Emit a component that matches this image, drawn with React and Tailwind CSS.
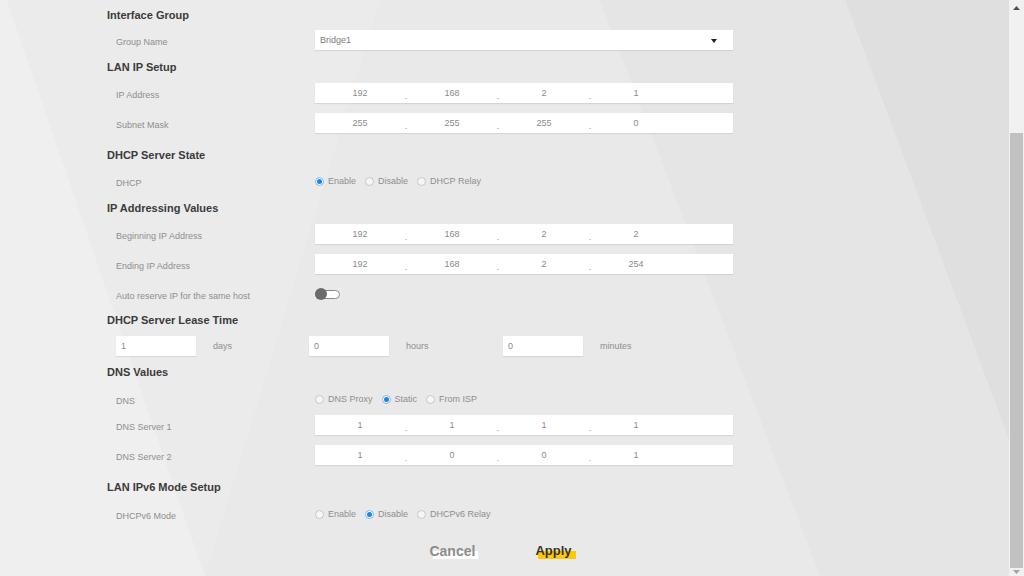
import React from "react";

const label = "w-[208px] pl-[9px] pt-[5px] text-[9px] text-[#8e8e8e]";
const box = "bg-white shadow-[0_1px_1px_rgba(0,0,0,0.08)]";

const Heading = ({ children, className = "" }) => (
  <div className={`h-[24px] flex items-center text-[11px] font-bold text-[#3a3a3a] ${className}`}>
    {children}
  </div>
);

const Row = ({ title, children, className = "" }) => (
  <div className={`h-[20px] flex items-center ${className}`}>
    <div className={label}>{title}</div>
    {children}
  </div>
);

const IpInput = ({ octets }) => (
  <div className={`w-[418px] h-[20px] flex items-stretch text-[9px] text-[#8a8a8a] ${box}`}>
    {octets.map((o, i) => (
      <React.Fragment key={i}>
        <div className="w-[90px] flex items-center justify-center pt-[1px]">{o}</div>
        {i < 3 && (
          <div className="w-[2px] flex items-end justify-center pb-[2px] leading-none">.</div>
        )}
      </React.Fragment>
    ))}
  </div>
);

const Radio = ({ checked, text }) => (
  <div className="flex items-center gap-[4px]">
    {checked ? (
      <div className="w-[9px] h-[9px] rounded-full border border-[#7bb8ee] bg-white flex items-center justify-center">
        <div className="w-[5px] h-[5px] rounded-full bg-[#1f86e0]" />
      </div>
    ) : (
      <div className="w-[9px] h-[9px] rounded-full border border-[#c6c6c6] bg-[#f6f6f6]" />
    )}
    <span className="pt-[1px] text-[9px] text-[#8e8e8e]">{text}</span>
  </div>
);

const RadioGroup = ({ items, selected }) => (
  <div className="flex items-center gap-[9px] pt-[1px]">
    {items.map((t) => (
      <Radio key={t} text={t} checked={t === selected} />
    ))}
  </div>
);

const LeaseField = ({ value, unit, w }) => (
  <div className={`flex items-center ${w}`}>
    <div className={`w-[80px] h-[20px] flex items-center pl-[5px] pt-[1px] text-[9px] text-[#8a8a8a] ${box}`}>
      {value}
    </div>
    <span className="ml-[17px] pt-[1px] text-[9px] text-[#8e8e8e]">{unit}</span>
  </div>
);

const Background = () => (
  <svg
    className="absolute inset-0 w-full h-full"
    viewBox="0 0 1009 576"
    preserveAspectRatio="none"
  >
    <rect width="1009" height="576" fill="#e9e9e9" />
    <polygon points="0,0 7,0 205,576 0,576" fill="#efefef" />
    <polygon points="7,0 380,0 205,576" fill="#ebebeb" />
    <polygon points="845,0 1009,0 1009,440" fill="#dfdfdf" />
    <polygon points="600,0 845,0 1009,440 1009,576 820,576" fill="#e5e5e5" />
  </svg>
);

export default function App() {
  return (
    <div className="flex h-[576px] w-full overflow-hidden font-['Liberation_Sans',Arial,sans-serif]">
      <main className="relative flex-1">
        <Background />
        <div className="relative flex flex-col pl-[107px] pt-[3px]">
          <Heading>Interface Group</Heading>
          <Row title="Group Name" className="mt-[3px]">
            <div className={`w-[418px] h-[20px] flex items-center justify-between pl-[5px] pr-[16px] pt-[1px] text-[9px] text-[#7a7a7a] ${box}`}>
              <span>Bridge1</span>
              <svg width="6" height="4" viewBox="0 0 6 4">
                <path d="M0 0 L6 0 L3 4 Z" fill="#222" />
              </svg>
            </div>
          </Row>

          <Heading className="mt-[5px]">LAN IP Setup</Heading>
          <Row title="IP Address" className="mt-[4px]">
            <IpInput octets={["192", "168", "2", "1"]} />
          </Row>
          <Row title="Subnet Mask" className="mt-[10px]">
            <IpInput octets={["255", "255", "255", "0"]} />
          </Row>

          <Heading className="mt-[10px]">DHCP Server State</Heading>
          <Row title="DHCP" className="mt-[4px]">
            <RadioGroup items={["Enable", "Disable", "DHCP Relay"]} selected="Enable" />
          </Row>

          <Heading className="mt-[5px]">IP Addressing Values</Heading>
          <Row title="Beginning IP Address" className="mt-[4px]">
            <IpInput octets={["192", "168", "2", "2"]} />
          </Row>
          <Row title="Ending IP Address" className="mt-[10px]">
            <IpInput octets={["192", "168", "2", "254"]} />
          </Row>
          <Row title="Auto reserve IP for the same host" className="mt-[10px]">
            <div className="relative w-[25px] h-[12px] flex items-center">
              <div className="w-full h-[9px] rounded-full border border-[#8a8a8a] bg-white" />
              <div className="absolute left-0 top-0 w-[12px] h-[12px] rounded-full bg-[#6b6b6b]" />
            </div>
          </Row>

          <Heading className="mt-[4px]">DHCP Server Lease Time</Heading>
          <div className="h-[20px] mt-[4px] flex items-center pl-[9px]">
            <LeaseField value="1" unit="days" w="w-[193px]" />
            <LeaseField value="0" unit="hours" w="w-[194px]" />
            <LeaseField value="0" unit="minutes" w="w-[200px]" />
          </div>

          <Heading className="mt-[4px]">DNS Values</Heading>
          <Row title="DNS" className="mt-[5px]">
            <RadioGroup items={["DNS Proxy", "Static", "From ISP"]} selected="Static" />
          </Row>
          <Row title="DNS Server 1" className="mt-[6px]">
            <IpInput octets={["1", "1", "1", "1"]} />
          </Row>
          <Row title="DNS Server 2" className="mt-[10px]">
            <IpInput octets={["1", "0", "0", "1"]} />
          </Row>

          <Heading className="mt-[10px]">LAN IPv6 Mode Setup</Heading>
          <Row title="DHCPv6 Mode" className="mt-[5px]">
            <RadioGroup items={["Enable", "Disable", "DHCPv6 Relay"]} selected="Disable" />
          </Row>
        </div>

        <div className="relative mt-[17px] h-[20px] flex items-center justify-center gap-[60px] pr-[8px] font-bold">
          <span className="relative inline-block text-[14px] leading-[16px]">
            <span className="absolute left-[4px] -right-[3px] bottom-0 h-[8px] bg-white" />
            <span className="relative text-[#8c8c8c]">Cancel</span>
          </span>
          <span className="relative inline-block text-[13px] leading-[16px]">
            <span className="absolute left-[3px] -right-[4px] bottom-0 h-[8px] bg-[#ffc800]" />
            <span className="relative text-[#333]">Apply</span>
          </span>
        </div>
      </main>

      <aside className="w-[15px] flex flex-col bg-[#f1f1f1]">
        <div className="h-[15px] flex items-center justify-center">
          <svg width="7" height="4" viewBox="0 0 7 4">
            <path d="M0 4 L3.5 0 L7 4 Z" fill="#505050" />
          </svg>
        </div>
        <div className="flex-1 flex flex-col pt-[118px] px-[1px]">
          <div className="flex-1 bg-[#c1c1c1]" />
        </div>
        <div className="h-[8px] flex items-start justify-center pt-[2px]">
          <svg width="7" height="4" viewBox="0 0 7 4">
            <path d="M0 0 L7 0 L3.5 4 Z" fill="#a3a3a3" />
          </svg>
        </div>
      </aside>
    </div>
  );
}
